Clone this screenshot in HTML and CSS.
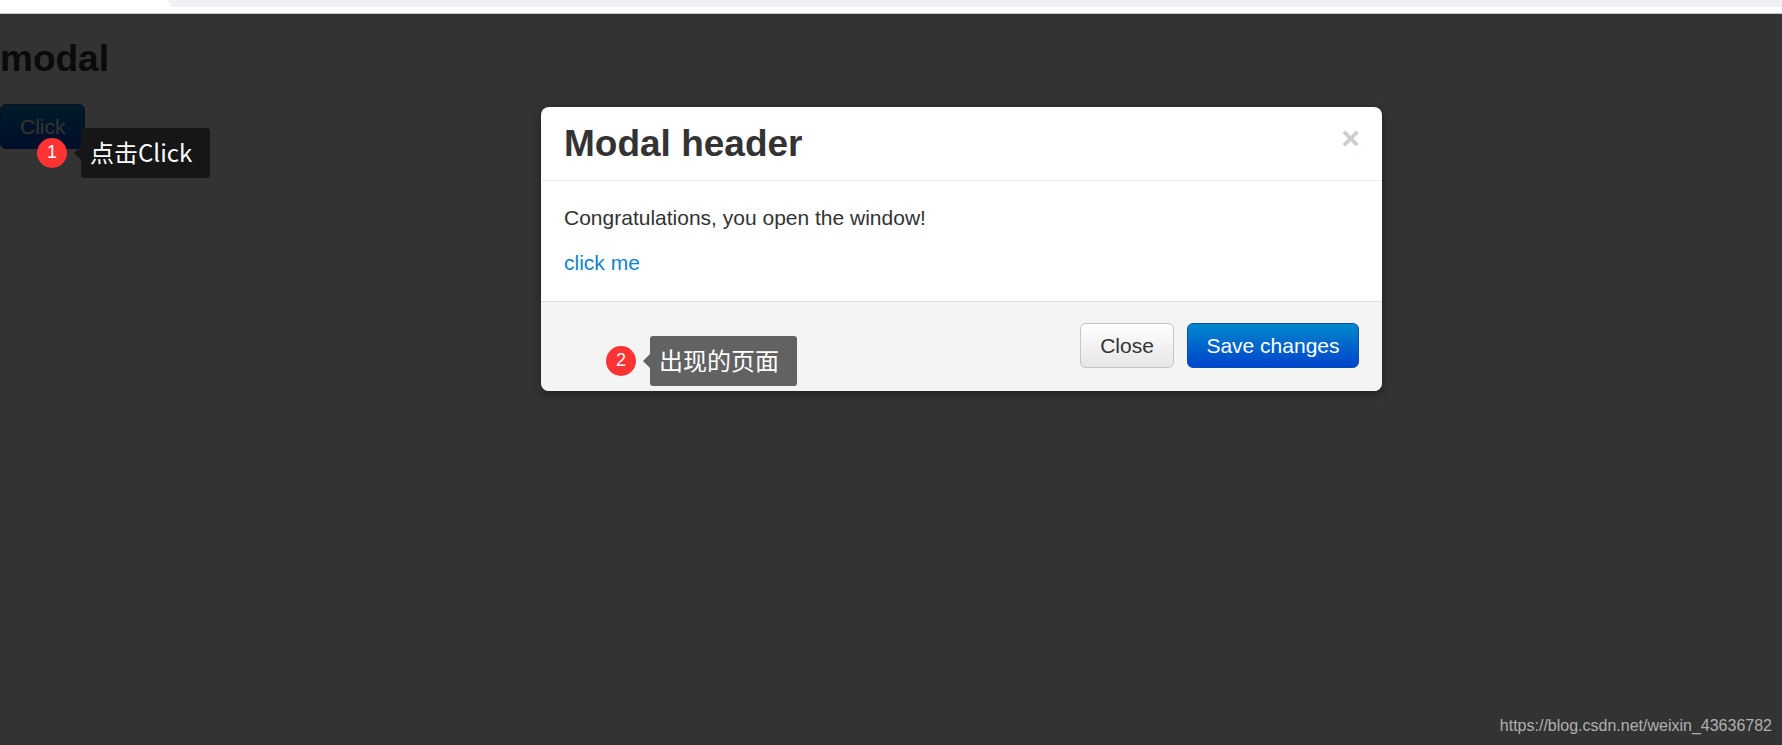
FILE: index.html
```html
<!DOCTYPE html>
<html lang="zh">
<head>
<meta charset="utf-8">
<title>modal</title>
<link rel="stylesheet" href="styles.css">
</head>
<body>
<div class="browser-strip"><div class="address-edge"></div></div>
<main class="page">
  <h1 class="page-title">modal</h1>
  <button class="btn btn-primary page-btn">Click</button>
  <div class="backdrop"></div>
</main>
<section class="modal">
  <header class="modal-header">
    <h3 class="modal-title">Modal header</h3>
    <span class="modal-close">×</span>
  </header>
  <div class="modal-body">
    <p class="modal-text">Congratulations, you open the window!</p>
    <a class="modal-link">click me</a>
  </div>
  <footer class="modal-footer">
    <button class="btn btn-default">Close</button>
    <button class="btn btn-primary btn-save">Save changes</button>
  </footer>
</section>
<div class="note note-one"><span class="note-badge">1</span><span class="note-label note-label-dark">点击Click</span></div>
<div class="note note-two"><span class="note-badge">2</span><span class="note-label note-label-grey">出现的页面</span></div>
<div class="watermark">https://blog.csdn.net/weixin_43636782</div>
</body>
</html>
```
FILE: styles.css
```css
* { box-sizing: border-box; }
html, body { margin: 0; height: 100%; }
body {
  position: relative;
  overflow: hidden;
  background: #fff;
  font-family: "Liberation Sans", Arial, sans-serif;
  color: #333;
  display: flex;
  flex-direction: column;
}
.browser-strip {
  height: 14px;
  flex: none;
  background: #fff;
  border-bottom: 1px solid #c8c8c8;
  padding-left: 168px;
}
.address-edge {
  height: 7px;
  background: #f0f1f4;
  border-bottom-left-radius: 12px;
}
.page { position: relative; flex: 1; }
.page-title {
  margin: 25px 0 0;
  font-size: 37px;
  line-height: 40px;
  font-weight: bold;
  color: #333;
}
.page-btn { margin-top: 25px; display: block; width: 85px; }
.backdrop {
  position: absolute;
  inset: 0;
  background: rgba(0, 0, 0, .8);
}
.btn {
  height: 45px;
  padding: 0 19px;
  border-radius: 6px;
  font-family: inherit;
  font-size: 21px;
  line-height: 43px;
}
.btn-primary {
  color: #fff;
  background: linear-gradient(#0088cc, #0044cc);
  border: 1px solid #0550b4;
}
.btn-save { padding: 0 18.5px; }
.btn-default {
  color: #333;
  background: linear-gradient(#fff, #e6e6e6);
  border: 1px solid #c4c4c4;
}
.modal {
  position: absolute;
  left: 541px;
  top: 107px;
  width: 841px;
  height: 284px;
  background: #fff;
  border-radius: 8px;
  box-shadow: 0 3px 10px rgba(0, 0, 0, .4);
  display: flex;
  flex-direction: column;
  overflow: hidden;
}
.modal-header {
  height: 74px;
  padding: 0 23px;
  display: flex;
  justify-content: space-between;
  border-bottom: 1px solid #eee;
  flex: none;
}
.modal-title {
  margin: 0;
  font-size: 37px;
  line-height: 73px;
  font-weight: bold;
}
.modal-close {
  font-size: 32px;
  font-weight: bold;
  line-height: 63px;
  color: #ccc;
  margin-right: -1px;
}
.modal-body { flex: 1; padding: 23px 23px 0; font-size: 21px; line-height: 28px; }
.modal-text { margin: 0 0 17px; }
.modal-link { color: #0d84cd; }
.modal-footer {
  height: 90px;
  flex: none;
  background: #f4f4f4;
  border-top: 1px solid #ddd;
  padding: 21px 23px 0;
  display: flex;
  justify-content: flex-end;
  align-items: flex-start;
  gap: 13px;
}
.note {
  position: absolute;
  display: flex;
  align-items: center;
  color: #fff;
  font-family: "Noto Sans CJK SC", "Liberation Sans", sans-serif;
}
.note-one { left: 37px; top: 128px; }
.note-two { left: 606px; top: 336px; }
.note-badge {
  width: 30px;
  height: 30px;
  border-radius: 50%;
  background: #ff3333;
  font-family: "Liberation Sans", sans-serif;
  font-size: 18px;
  line-height: 29px;
  text-align: center;
}
.note-label {
  position: relative;
  margin-left: 14px;
  height: 50px;
  line-height: 48px;
  font-size: 24px;
  padding: 0 9px;
  border-radius: 3px;
}
.note-label::before {
  content: "";
  position: absolute;
  left: -7px;
  top: 18px;
  border-style: solid;
  border-width: 7px 7px 7px 0;
  border-color: transparent;
  border-right-color: inherit;
}
.note-label-dark { background: #161616; border-color: #161616; width: 129px; white-space: nowrap; }
.note-label-grey { background: #626262; border-color: #626262; width: 147px; white-space: nowrap; }
.watermark {
  position: absolute;
  right: 10px;
  bottom: 10px;
  font-size: 16px;
  color: #b0b0b0;
}
```
